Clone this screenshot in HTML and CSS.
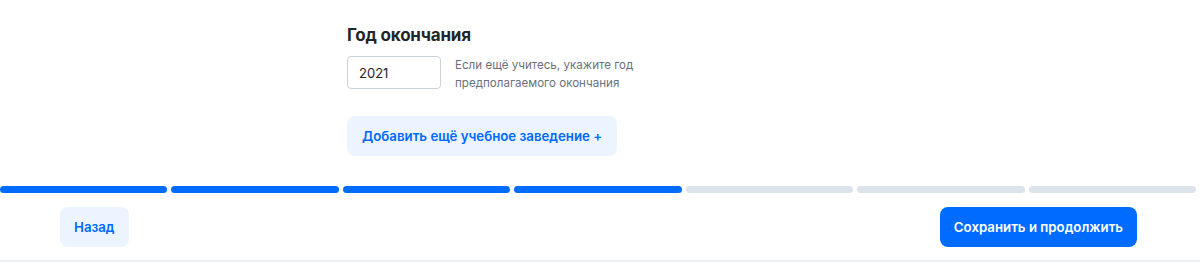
FILE: index.html
```html
<!DOCTYPE html>
<html lang="ru">
<head>
<meta charset="utf-8">
<link rel="stylesheet" href="styles.css">
</head>
<body>
<div class="page">
  <section class="form">
    <h2 class="title">Год окончания</h2>
    <div class="field-row">
      <input class="year" type="text" value="2021">
      <p class="hint">Если ещё учитесь, укажите год<br>предполагаемого окончания</p>
    </div>
    <button class="btn btn-light add">Добавить ещё учебное заведение +</button>
  </section>
  <div class="progress">
    <span class="seg done"></span>
    <span class="seg done"></span>
    <span class="seg done"></span>
    <span class="seg done"></span>
    <span class="seg"></span>
    <span class="seg"></span>
    <span class="seg"></span>
  </div>
  <footer class="actions">
    <button class="btn btn-light">Назад</button>
    <button class="btn btn-primary">Сохранить и продолжить</button>
  </footer>
</div>
</body>
</html>
```

FILE: styles.css
```css
* { box-sizing: border-box; }
html, body { margin: 0; padding: 0; background: #fff; }
body {
  font-family: Inter, "Noto Sans", sans-serif;
  color: #22252b;
}
.page { width: 1200px; }
.form {
  padding: 23px 0 0 347px;
  height: 186px;
}
.title {
  margin: 0;
  font-size: 17px;
  font-weight: 700;
  line-height: 24px;
  letter-spacing: -0.2px;
}
.field-row {
  display: flex;
  align-items: flex-start;
  gap: 14px;
  margin-top: 9px;
}
.year {
  width: 94px;
  height: 33px;
  border: 1px solid #c9d1dc;
  border-radius: 4px;
  padding: 0 11px;
  font-family: inherit;
  font-size: 13px;
  color: #22252b;
  outline: none;
}
.hint {
  margin: 0;
  font-size: 11.6px;
  line-height: 18px;
  color: #6a717c;
}
.btn {
  border: 0;
  border-radius: 8px;
  height: 40px;
  font-family: inherit;
  font-size: 13.25px;
  font-weight: 600;
  cursor: pointer;
}
.btn-light { background: #ebf4ff; color: #0069ff; padding: 0 14px; }
.btn-primary { background: #006cff; color: #fff; padding: 0 14px; }
.add { margin-top: 24px; padding: 0 15px; }
.progress {
  display: flex;
  height: 7px;
}
.seg {
  flex: 1;
  margin-right: 4px;
  border-radius: 4px;
  background: #dde3ea;
}
.seg.done { background: #006cff; }
.actions {
  display: flex;
  justify-content: space-between;
  padding: 14px 63px 13px 60px;
  border-bottom: 2px solid #eef1f5;
}
```
